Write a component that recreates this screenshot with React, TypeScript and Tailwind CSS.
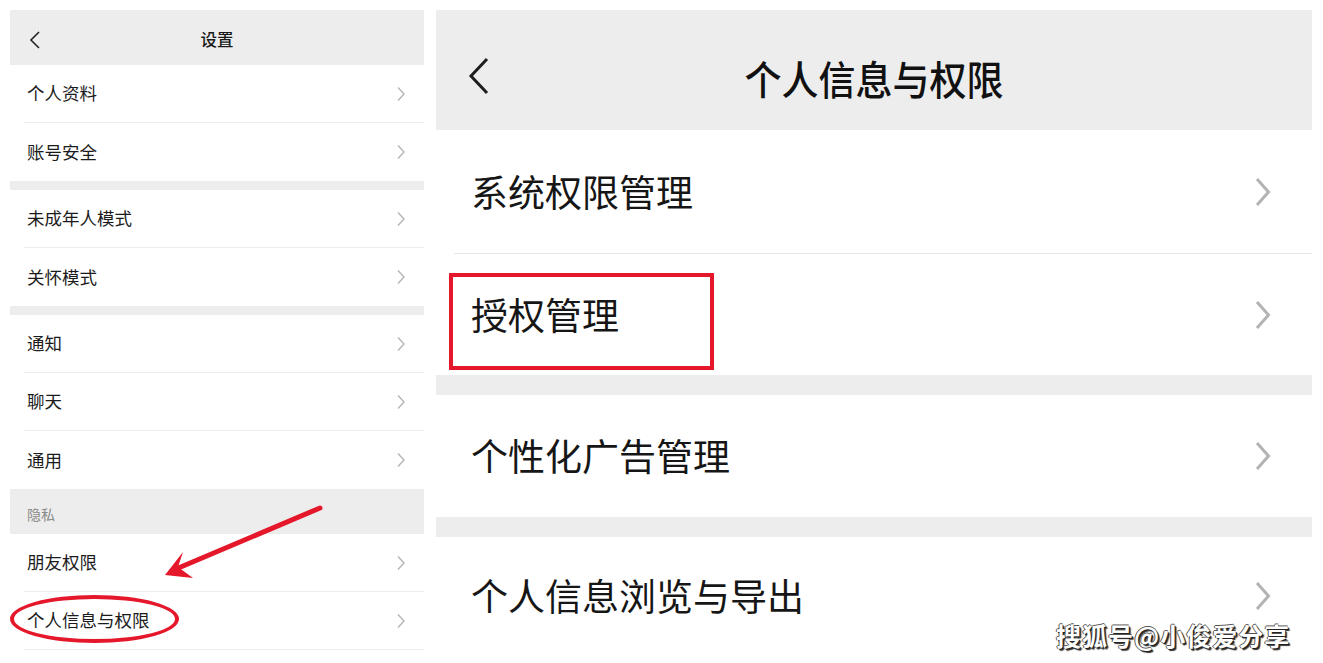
import React from "react";

const cjk = { fontFamily: '"Noto Sans CJK SC", "Noto Sans", sans-serif' };

function SmallChevron() {
  return (
    <svg width="10" height="16" viewBox="0 0 10 16" className="shrink-0">
      <path d="M2 1.5 L8 8 L2 14.5" fill="none" stroke="#b5b5b5" strokeWidth="1.4" />
    </svg>
  );
}

function BigChevron() {
  return (
    <svg width="18" height="30" viewBox="0 0 18 30" className="shrink-0">
      <path d="M3 2 L14.5 15 L3 28" fill="none" stroke="#b3b3b3" strokeWidth="3" />
    </svg>
  );
}

// 左侧小行
function Row({ label, last }: { label: string; last?: boolean }) {
  return (
    <div className="h-[58px] flex flex-col bg-white">
      <div className="flex-1 flex items-center justify-between pl-[17px] pr-[18px]">
        <span className="text-[17.5px] text-[#1b1b1b]">{label}</span>
        <SmallChevron />
      </div>
      {!last && <div className="h-px ml-[14px] bg-[#ececec]" />}
    </div>
  );
}

// 右侧大行
function BigRow({ label, h, sep }: { label: string; h: string; sep?: boolean }) {
  return (
    <div className={`${h} flex flex-col bg-white`}>
      <div className="flex-1 flex items-center justify-between pl-[35px] pr-[40px]">
        <span className="text-[37px] text-[#161616]">{label}</span>
        <BigChevron />
      </div>
      {sep && <div className="h-px ml-[18px] bg-[#e6e6e6]" />}
    </div>
  );
}

export default function App() {
  return (
    <div className="relative w-[1323px] h-[663px] overflow-hidden bg-white flex" style={cjk}>
      {/* 左：设置 */}
      <div className="ml-[10px] mt-[10px] w-[414px] flex flex-col">
        <div className="h-[55px] bg-[#ededed] flex items-center relative">
          <svg width="14" height="20" viewBox="0 0 14 20" className="ml-[18px] mt-[4px]">
            <path d="M11 2 L3 10 L11 18" fill="none" stroke="#222" strokeWidth="1.6" />
          </svg>
          <span className="absolute left-1/2 -translate-x-1/2 top-[17px] text-[16.5px] text-[#1a1a1a] font-medium">设置</span>
        </div>
        <Row label="个人资料" />
        <Row label="账号安全" last />
        <div className="h-[9px] bg-[#ededed]" />
        <Row label="未成年人模式" />
        <Row label="关怀模式" last />
        <div className="h-[9px] bg-[#ededed]" />
        <Row label="通知" />
        <Row label="聊天" />
        <Row label="通用" last />
        <div className="h-[45px] bg-[#ededed] flex items-end pb-[9px] pl-[17px]">
          <span className="text-[14px] text-[#8a8a8a]">隐私</span>
        </div>
        <Row label="朋友权限" />
        <Row label="个人信息与权限" />
      </div>

      {/* 右：个人信息与权限 */}
      <div className="ml-[12px] mt-[10px] w-[876px] flex flex-col">
        <div className="h-[120px] bg-[#ededed] flex items-center relative">
          <svg width="26" height="40" viewBox="0 0 26 40" className="ml-[30px] mt-[12px]">
            <path d="M21 3 L5 20 L21 37" fill="none" stroke="#1e1e1e" strokeWidth="3" />
          </svg>
          <span className="absolute left-1/2 -translate-x-1/2 top-[40px] text-[37px] leading-[56px] text-[#111] font-medium scale-y-[1.08]">
            个人信息与权限
          </span>
        </div>
        <BigRow label="系统权限管理" h="h-[124px]" sep />
        <BigRow label="授权管理" h="h-[121px]" />
        <div className="h-[20px] bg-[#ededed]" />
        <BigRow label="个性化广告管理" h="h-[122px]" />
        <div className="h-[20px] bg-[#ededed]" />
        <BigRow label="个人信息浏览与导出" h="h-[118px]" />
      </div>

      {/* 标注 */}
      <div className="absolute left-[449px] top-[273px] w-[265px] h-[97px] border-[4px] border-[#e5172b]" />
      <div className="absolute left-[10px] top-[595px] w-[169px] h-[48px] border-[4px] border-[#e5172b] rounded-[50%]" />
      <svg className="absolute left-0 top-0 pointer-events-none" width="1323" height="663">
        <line x1="320" y1="508" x2="176" y2="569" stroke="#e5172b" strokeWidth="5" strokeLinecap="round" />
        <path d="M165 575 L183 552 L178 567 L193 578 Z" fill="#e5172b" />
      </svg>

      {/* 水印 */}
      <div
        className="absolute left-[1056px] top-[617px] text-[25px] font-bold text-white tracking-[1px]"
        style={{ textShadow: "1px 1px 0 #222, -1px 0 0 #555, 0 -1px 0 #555, 2px 2px 1px #333" }}
      >
        搜狐号@小俊爱分享
      </div>
    </div>
  );
}
